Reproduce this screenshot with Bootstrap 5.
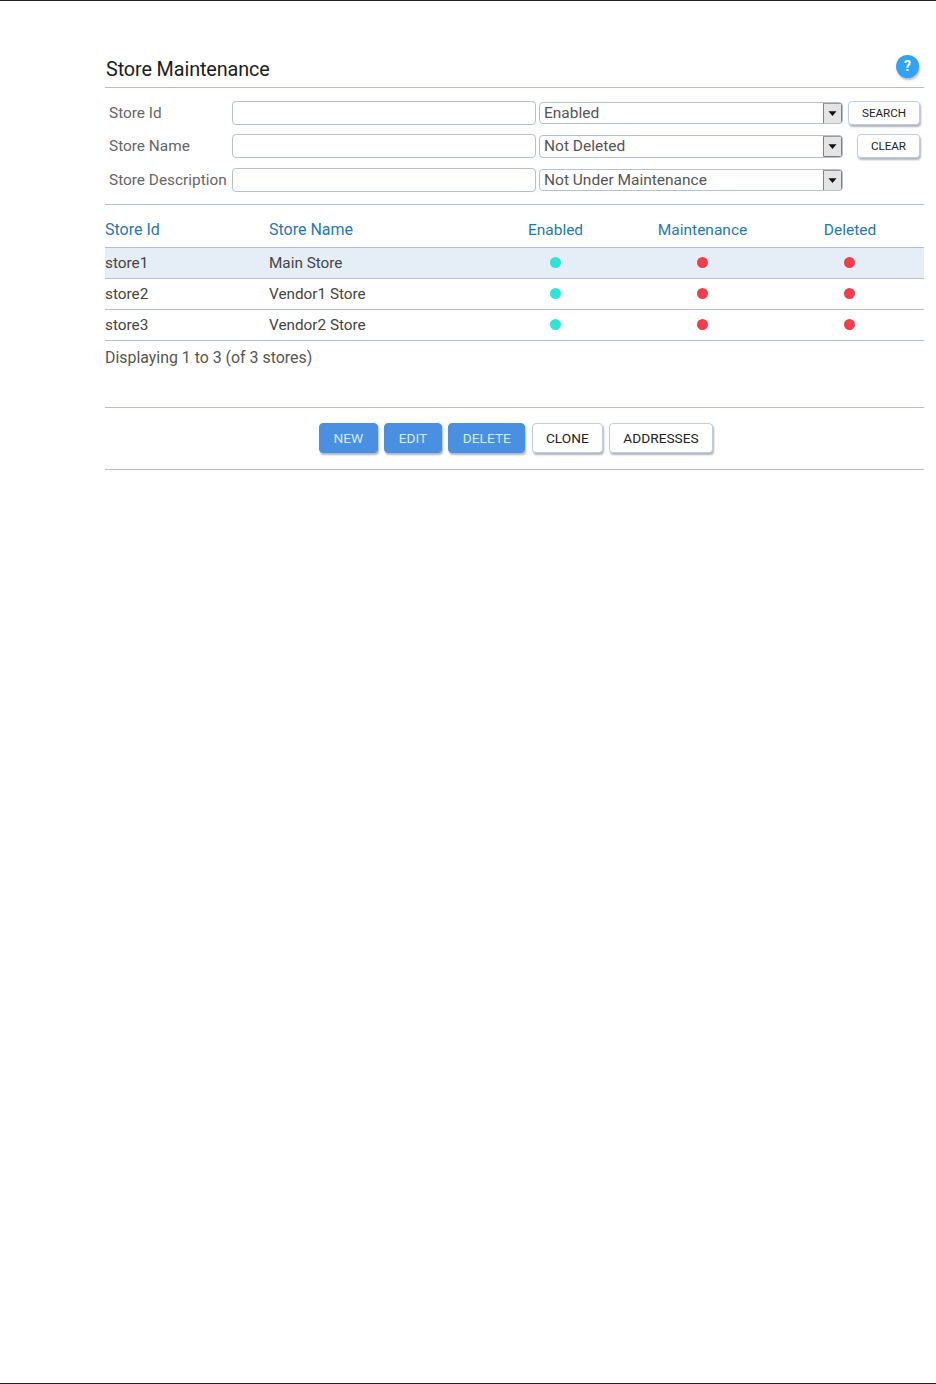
<!DOCTYPE html>
<html lang="en">
<head>
<meta charset="utf-8">
<title>Store Maintenance</title>
<link href="https://cdn.jsdelivr.net/npm/bootstrap@5.3.0/dist/css/bootstrap.min.css" rel="stylesheet">
<style>
body{font-family:Roboto,sans-serif;font-size:15.3px;color:#444;background:#fff}
.page-frame{height:1384px;border-top:1px solid #222;border-bottom:1px solid #222;padding:0 12px 0 105px}
.title-bar{height:86px;width:817px;box-sizing:content-box;border-bottom:1px solid #b4bfd0;padding:0 1px}
.title-text{font-size:19.8px;font-weight:400;color:#1c1c1c;margin:0;line-height:24px;padding-bottom:5px;letter-spacing:-.1px}
.help-dot{width:23px;height:23px;border-radius:50%;background:#34a2f2;color:#fff;font-weight:700;font-size:14px;line-height:23px;text-align:center;margin:0 4px 9px 0;box-shadow:1px 2px 2px rgba(90,100,120,.4)}
.filter-panel{width:815px;height:103.25px;box-sizing:content-box;border-bottom:1px solid #b4bfd0;padding:12.75px 0 0 4px;display:grid;grid-template-columns:123px 304px 307px 1fr;grid-auto-rows:24px;row-gap:9.5px}
.filter-label{line-height:24px;font-size:15.4px;color:#666;white-space:nowrap}
.filter-input{height:24px;padding:0 4px;border:1px solid #b4bfd0;border-radius:4px;box-shadow:none;width:304px}
.filter-select{height:22.5px;margin:.75px 0 0 3px;width:304px;padding:0 22px 0 4px;font-size:15.5px;line-height:20px;color:#555;border:1px solid #b4bfd0;border-radius:4px;box-shadow:none;background-size:19px 21px;background-position:right 0 center;background-repeat:no-repeat;background-image:url("data:image/svg+xml,%3Csvg xmlns='http://www.w3.org/2000/svg' viewBox='0 0 19 21'%3E%3Crect x='.5' y='.5' width='18' height='20' rx='1' fill='%23e4e4e4' stroke='%23808080'/%3E%3Cpath d='M5.5 8.5h8l-4 4.5z' fill='%23111'/%3E%3C/svg%3E")}
.filter-action{justify-self:end;margin-right:4px}
.flat-btn{height:24px;padding:0 13px;font-size:11.6px;line-height:22px;color:#222;background:#fff;border:1px solid #c3ccd9;border-radius:4px;box-shadow:1px 2px 2px rgba(110,120,140,.55);text-transform:uppercase}
.store-grid{width:819px;table-layout:fixed;margin:0;font-size:15.3px;--bs-table-bg:transparent}
.store-grid th,.store-grid td{padding:0;border-bottom:1px solid #b4bfd0;vertical-align:middle;color:#444;font-weight:400;line-height:20px}
.store-grid th{height:42px;padding-top:9px;color:#1f78b4;font-size:15.5px}
.store-grid th.head-wide{font-size:16px}
.store-grid td{height:31px}
.store-grid tr.row-picked td{background:#e5eef6}
.status-dot{display:block;width:11px;height:11px;border-radius:50%;margin-left:68px}
.dot-on{background:#2de5d6}
.dot-off{background:#f03e4c}
.result-note{height:67px;width:819px;border-bottom:1px solid #b4bfd0;padding-top:7.5px;line-height:20px;font-size:15.9px;color:#555}
.action-bar{height:62px;width:819px;border-bottom:1px solid #b4bfd0;padding:0 0 1px 214px;gap:6.6px}
.wide-btn{height:30px;padding:0 13px;font-size:13.7px;line-height:28px;color:#222;background:#fff;border:1px solid #c3ccd9;border-radius:4px;box-shadow:1px 2px 2px rgba(110,120,140,.55);text-transform:uppercase}
.wide-btn.is-primary{padding:0 13.5px;background:#4a90e2;border-color:#4a90e2;color:#d9e8f8}
</style>
</head>
<body>
<div class="page-frame">
  <div class="title-bar d-flex justify-content-between align-items-end">
    <h1 class="title-text">Store Maintenance</h1>
    <div class="help-dot">?</div>
  </div>
  <div class="filter-panel">
    <label class="filter-label">Store Id</label>
    <input class="form-control filter-input" type="text">
    <select class="form-select filter-select"><option>Enabled</option></select>
    <button class="btn flat-btn filter-action" type="button">Search</button>
    <label class="filter-label">Store Name</label>
    <input class="form-control filter-input" type="text">
    <select class="form-select filter-select"><option>Not Deleted</option></select>
    <button class="btn flat-btn filter-action" type="button">Clear</button>
    <label class="filter-label">Store Description</label>
    <input class="form-control filter-input" type="text">
    <select class="form-select filter-select"><option>Not Under Maintenance</option></select>
    <span></span>
  </div>
  <table class="table store-grid">
    <colgroup><col style="width:164px"><col style="width:213px"><col style="width:147px"><col style="width:147px"><col style="width:148px"></colgroup>
    <thead>
      <tr><th class="head-wide">Store Id</th><th class="head-wide">Store Name</th><th class="text-center">Enabled</th><th class="text-center">Maintenance</th><th class="text-center">Deleted</th></tr>
    </thead>
    <tbody>
      <tr class="row-picked"><td>store1</td><td>Main Store</td><td><span class="status-dot dot-on"></span></td><td><span class="status-dot dot-off"></span></td><td><span class="status-dot dot-off"></span></td></tr>
      <tr><td>store2</td><td>Vendor1 Store</td><td><span class="status-dot dot-on"></span></td><td><span class="status-dot dot-off"></span></td><td><span class="status-dot dot-off"></span></td></tr>
      <tr><td>store3</td><td>Vendor2 Store</td><td><span class="status-dot dot-on"></span></td><td><span class="status-dot dot-off"></span></td><td><span class="status-dot dot-off"></span></td></tr>
    </tbody>
  </table>
  <div class="result-note">Displaying 1 to 3 (of 3 stores)</div>
  <div class="action-bar d-flex align-items-center">
    <button class="btn wide-btn is-primary" type="button">New</button>
    <button class="btn wide-btn is-primary" type="button">Edit</button>
    <button class="btn wide-btn is-primary" type="button">Delete</button>
    <button class="btn wide-btn" type="button">Clone</button>
    <button class="btn wide-btn" type="button">Addresses</button>
  </div>
</div>
</body>
</html>
